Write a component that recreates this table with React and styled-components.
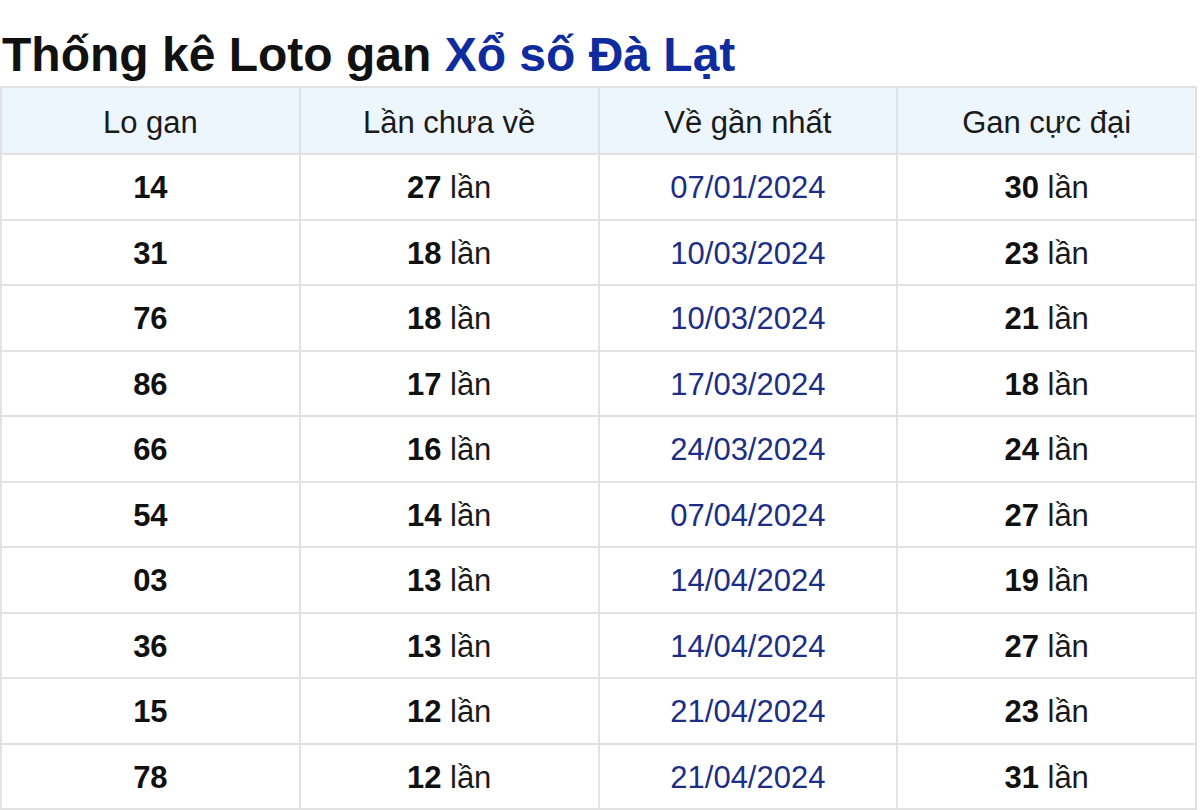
import React from "react";
import styled, { createGlobalStyle } from "styled-components";

const GlobalStyle = createGlobalStyle`
  html, body {
    margin: 0;
    padding: 0;
    background: #fff;
  }
  body {
    font-family: "Liberation Sans", Arial, sans-serif;
  }
`;

const rows = [
  { so: "14", chua: 27, ngay: "07/01/2024", max: 30 },
  { so: "31", chua: 18, ngay: "10/03/2024", max: 23 },
  { so: "76", chua: 18, ngay: "10/03/2024", max: 21 },
  { so: "86", chua: 17, ngay: "17/03/2024", max: 18 },
  { so: "66", chua: 16, ngay: "24/03/2024", max: 24 },
  { so: "54", chua: 14, ngay: "07/04/2024", max: 27 },
  { so: "03", chua: 13, ngay: "14/04/2024", max: 19 },
  { so: "36", chua: 13, ngay: "14/04/2024", max: 27 },
  { so: "15", chua: 12, ngay: "21/04/2024", max: 23 },
  { so: "78", chua: 12, ngay: "21/04/2024", max: 31 },
];

const App = () => {
  return (
    <Page>
      <GlobalStyle />
      <Title>
        Thống kê Loto gan <Province>Xổ số Đà Lạt</Province>
      </Title>
      <Table>
        <thead>
          <tr>
            <Th>Lo gan</Th>
            <Th>Lần chưa về</Th>
            <Th>Về gần nhất</Th>
            <Th>Gan cực đại</Th>
          </tr>
        </thead>
        <tbody>
          {rows.map((r) => (
            <tr key={r.so}>
              <Td>
                <b>{r.so}</b>
              </Td>
              <Td>
                <b>{r.chua}</b> lần
              </Td>
              <Td $date>{r.ngay}</Td>
              <Td>
                <b>{r.max}</b> lần
              </Td>
            </tr>
          ))}
        </tbody>
      </Table>
    </Page>
  );
};

export default App;

const Page = styled.div`
  width: 1197px;
  padding-top: 26px;
`;

const Title = styled.h2`
  margin: 0 0 2px 2px;
  font-size: 48px;
  line-height: 58px;
  font-weight: bold;
  color: #111;
`;

const Province = styled.span`
  color: #0f2c9e;
`;

const Table = styled.table`
  width: 100%;
  border-collapse: collapse;
  table-layout: fixed;
`;

const Th = styled.th`
  height: 61px;
  padding: 4px 0 0;
  background: #eef6fd;
  border: 2px solid #e2e2e2;
  font-size: 31px;
  font-weight: normal;
  color: #1a1a1a;
  text-align: center;
`;

const Td = styled.td`
  height: 60.5px;
  padding: 3px 0 0;
  border: 2px solid #e2e2e2;
  font-size: 31px;
  text-align: center;
  color: ${(p) => (p.$date ? "#1c2f85" : "#1a1a1a")};

  b {
    color: #111;
  }
`;
